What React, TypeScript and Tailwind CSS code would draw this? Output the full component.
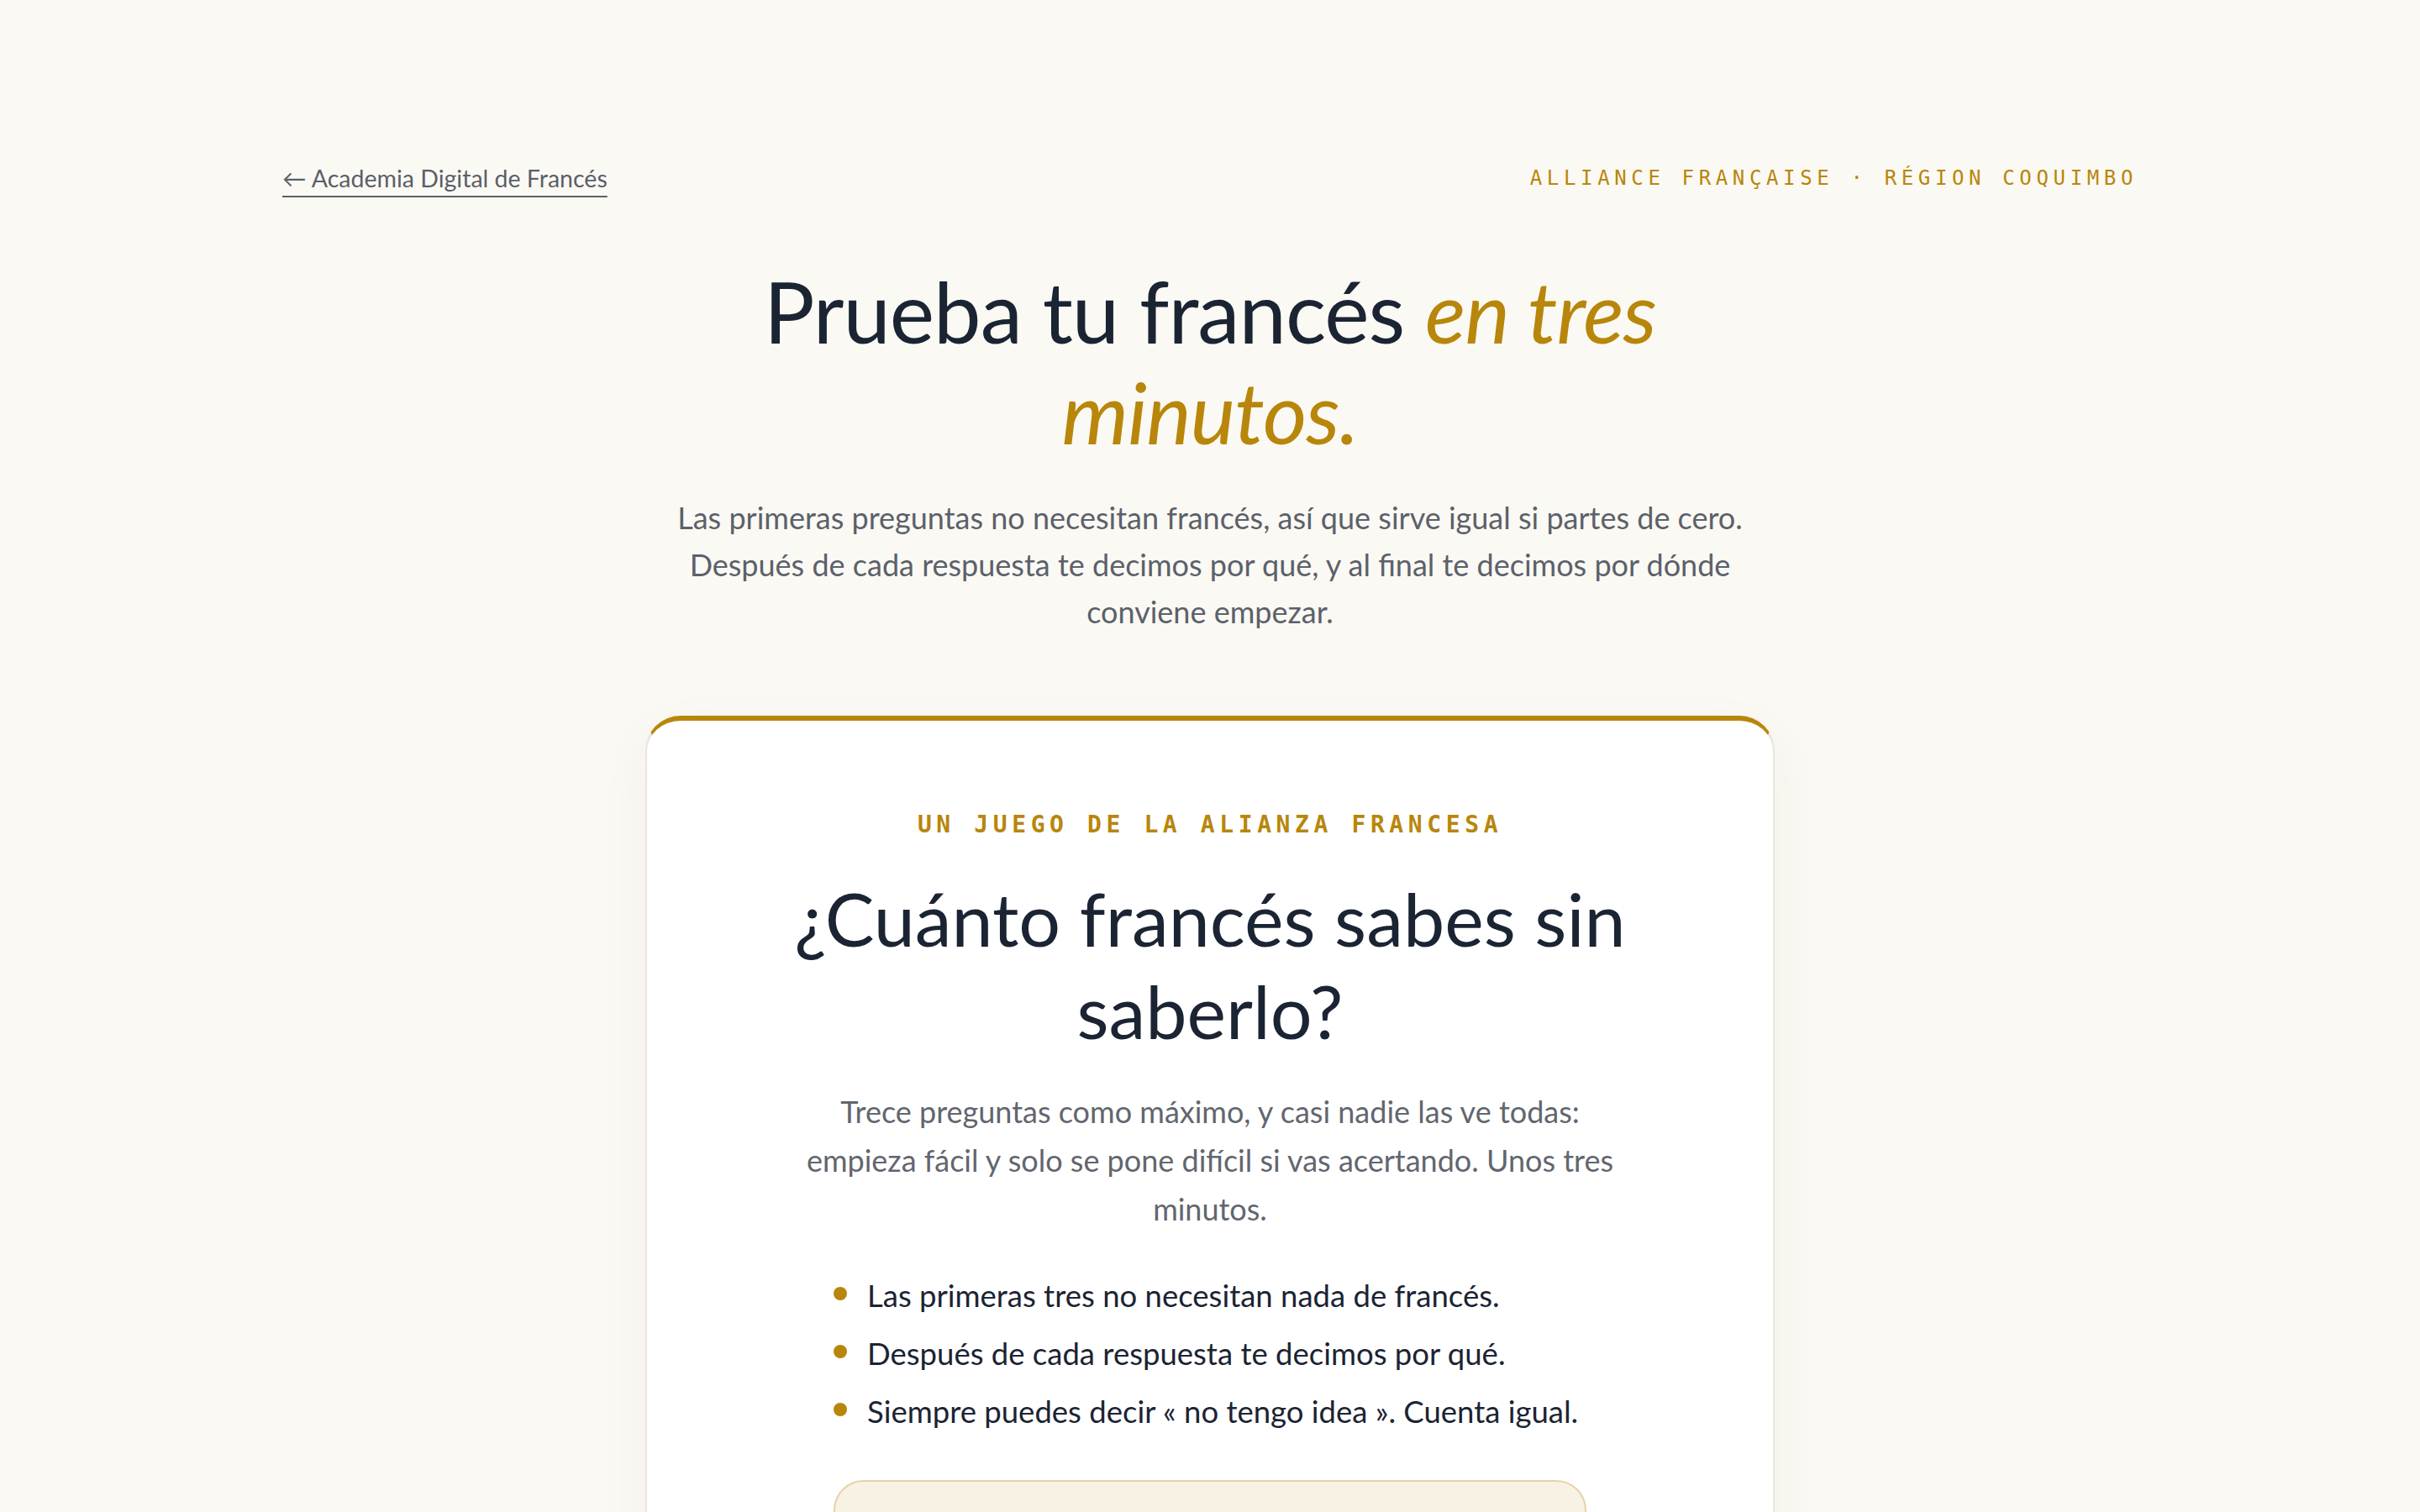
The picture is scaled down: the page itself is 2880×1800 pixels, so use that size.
const BULLETS = [
  'Las primeras tres no necesitan nada de francés.',
  'Después de cada respuesta te decimos por qué.',
  'Siempre puedes decir « no tengo idea ». Cuenta igual.',
]

const SANS = "font-['Lato','Inter','Noto_Sans',sans-serif]"
const MONO = "font-['DejaVu_Sans_Mono','Liberation_Mono',monospace]"

export default function App() {
  return (
    <div className={`min-h-screen bg-[#fbf9f3] text-[#1b2433] ${SANS}`}>
      <div className="mx-auto max-w-[2304px] px-12 pt-[190px] pb-48">
        {/* Top bar */}
        <header className="flex items-center justify-between">
          <a
            href="#"
            className="text-[28.5px] leading-[44px] text-[#5a5f69] underline decoration-2 decoration-[#5a5f69] underline-offset-[10px]"
          >
            ← Academia Digital de Francés
          </a>
          <p className={`${MONO} text-[24px] uppercase tracking-[0.235em] text-[#b8860b]`}>
            Alliance Française · Région Coquimbo
          </p>
        </header>

        {/* Hero */}
        <section className="mt-[76px] flex flex-col items-center text-center">
          <h1 className="text-[101px] leading-[120px] font-normal tracking-[-0.01em] text-[#1b2433]">
            Prueba tu francés <em className="text-[#b8860b]">en tres</em>
            <br />
            <em className="text-[#b8860b]">minutos.</em>
          </h1>
          <p className="mt-[38px] text-[36px] leading-[56px] text-[#5b616b]">
            Las primeras preguntas no necesitan francés, así que sirve igual si partes de cero.
            <br />
            Después de cada respuesta te decimos por qué, y al final te decimos por dónde
            <br />
            conviene empezar.
          </p>
        </section>

        {/* Card */}
        <section className="mx-auto mt-24 max-w-[1344px] rounded-[42px] border-2 border-[#e9e6df] border-t-[6px] border-t-[#b8860b] bg-white px-24 pt-[104px] pb-32 shadow-[0_20px_60px_rgba(60,50,20,0.05)]">
          <p className={`${MONO} text-center text-[28px] font-bold leading-[40px] uppercase tracking-[0.2em] text-[#b8860b]`}>
            Un juego de la Alianza Francesa
          </p>
          <h2 className="mt-9 text-center text-[88px] leading-[110px] font-normal text-[#1b2433]">
            ¿Cuánto francés sabes sin
            <br />
            saberlo?
          </h2>
          <p className="mt-9 text-center text-[36px] leading-[58px] text-[#62666f]">
            Trece preguntas como máximo, y casi nadie las ve todas:
            <br />
            empieza fácil y solo se pone difícil si vas acertando. Unos tres
            <br />
            minutos.
          </p>

          <div className="mx-auto mt-[46px] max-w-[896px]">
            <ul className="flex flex-col gap-[13px]">
              {BULLETS.map(b => (
                <li key={b} className="flex items-start gap-6 text-[36.5px] leading-[56px] text-[#1b2433]">
                  <span className="mt-[18px] h-4 w-4 shrink-0 rounded-full bg-[#b8860b]" />
                  <span>{b}</span>
                </li>
              ))}
            </ul>

            <div className="mt-[54px] h-80 rounded-[36px] border-2 border-[#e6d4a6] bg-[#f8f2e4]" />
          </div>
        </section>
      </div>
    </div>
  )
}
